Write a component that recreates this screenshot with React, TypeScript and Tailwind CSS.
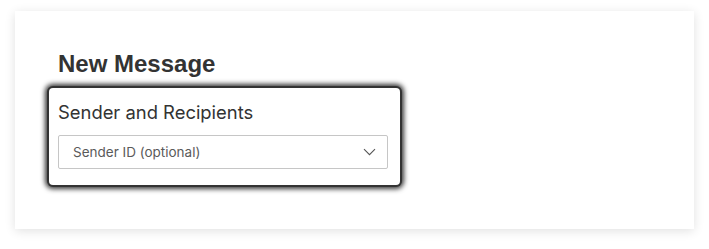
export default function App() {
  return (
    <div className="w-[709px] h-[249px] bg-white pt-[11px] pl-[15px]">
      <div className="w-[679px] h-[218px] bg-white shadow-[0_2px_10px_rgba(0,0,0,0.12)] pt-[39px] pl-[34px]">
        <h1
          className="ml-[9px] text-[24px] leading-[28px] font-bold text-[#333333]"
          style={{ fontFamily: '"Liberation Sans", Arial, sans-serif' }}
        >
          New Message
        </h1>
        <div className="mt-[10px] w-[351px] h-[97px] rounded-[4px] bg-white pt-[12px] pl-[9px] shadow-[0_0_0_2px_#333333,0_0_5px_4px_rgba(0,0,0,0.78)]">
          <div
            className="text-[18.4px] leading-[24px] text-[#333333]"
            style={{ fontFamily: 'Inter, "Noto Sans", sans-serif' }}
          >
            Sender and Recipients
          </div>
          <div className="mt-[11px] w-[330px] h-[34px] border border-[#c6c6c6] rounded-[2px] flex items-center justify-between pl-[14px] pr-[11px]">
            <span
              className="text-[13.5px] leading-[18px] text-[#5a5a5a]"
              style={{ fontFamily: 'Inter, "Noto Sans", sans-serif' }}
            >
              Sender ID (optional)
            </span>
            <svg width="13" height="8" viewBox="0 0 13 8" fill="none">
              <path d="M1 1.2L6.5 6.7L12 1.2" stroke="#555" strokeWidth="1.1" />
            </svg>
          </div>
        </div>
      </div>
    </div>
  );
}
